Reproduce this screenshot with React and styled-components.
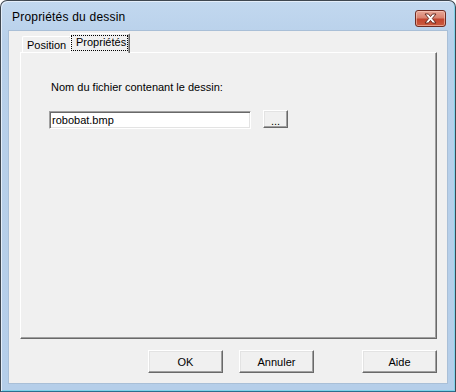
import React from 'react';
import styled, { createGlobalStyle } from 'styled-components';

const GlobalStyle = createGlobalStyle`
  html, body {
    margin: 0;
    padding: 0;
    background: #ffffff;
  }
  body {
    font-family: "Liberation Sans", Arial, sans-serif;
    font-size: 11px;
    color: #000;
  }
`;

const App = () => {
  return (
    <>
      <GlobalStyle />
      <Window>
        <TitleBar>
          <Title>Propriétés du dessin</Title>
          <CloseButton aria-label="Fermer">
            <svg width="15" height="11" viewBox="0 0 15 11">
              <path
                d="M2 1 L5.5 1 L7.5 3.6 L9.5 1 L13 1 L9.3 5.5 L13 10 L9.5 10 L7.5 7.4 L5.5 10 L2 10 L5.7 5.5 Z"
                fill="#ffffff"
                stroke="#5a1f17"
                strokeWidth="0.9"
                strokeLinejoin="round"
              />
            </svg>
          </CloseButton>
        </TitleBar>

        <Client>
          <TabStrip>
            <Tab $width={50}>Position</Tab>
            <Tab $active $width={60}>
              <FocusLabel>Propriétés</FocusLabel>
            </Tab>
          </TabStrip>

          <Panel>
            <FieldLabel>Nom du fichier contenant le dessin:</FieldLabel>
            <FieldRow>
              <TextInput defaultValue="robobat.bmp" />
              <BrowseButton>...</BrowseButton>
            </FieldRow>
          </Panel>

          <ButtonRow>
            <DialogButton>OK</DialogButton>
            <DialogButton $gap={16}>Annuler</DialogButton>
            <DialogButton $gap={48}>Aide</DialogButton>
          </ButtonRow>
        </Client>
      </Window>
    </>
  );
};

const Window = styled.div`
  box-sizing: border-box;
  width: 456px;
  height: 392px;
  border: 1px solid #3f4750;
  border-bottom-color: #2b6f8e;
  border-radius: 7px 7px 0 0;
  background: linear-gradient(to bottom, #c2d8ef 0px, #b8d0ea 40px, #b5cee9 100%);
  display: flex;
  flex-direction: column;
  box-shadow: inset 1px 1px 0 #e4eefa, inset -1px -1px 0 #7fd3ea;
`;

const TitleBar = styled.div`
  height: 29px;
  flex-shrink: 0;
  display: flex;
  align-items: flex-start;
  justify-content: space-between;
  padding: 0 9px 0 11px;
`;

const Title = styled.span`
  margin-top: 9px;
  font-family: "Liberation Sans", Arial, sans-serif;
  font-size: 12px;
  color: #000;
  letter-spacing: 0.2px;
`;

const CloseButton = styled.div`
  box-sizing: border-box;
  margin-top: 9px;
  width: 31px;
  height: 17px;
  border: 1px solid #6e2c23;
  border-radius: 3px;
  background: linear-gradient(to bottom, #e8a898 0%, #d98370 45%, #c2452f 55%, #cb5c40 100%);
  box-shadow: inset 0 0 0 1px rgba(255, 210, 195, 0.55);
  display: flex;
  align-items: center;
  justify-content: center;
`;

const Client = styled.div`
  box-sizing: border-box;
  margin: 0 7px 7px 7px;
  width: 440px;
  height: 354px;
  background: #f0f0f0;
  border: 1px solid #a9bfd7;
  display: flex;
  flex-direction: column;
  padding: 2px 10px 0 11px;
`;

const TabStrip = styled.div`
  height: 19px;
  display: flex;
  align-items: flex-end;
  padding-left: 2px;
`;

const Tab = styled.div`
  box-sizing: border-box;
  position: relative;
  width: ${(p) => p.$width}px;
  height: ${(p) => (p.$active ? '20px' : '16px')};
  margin-bottom: ${(p) => (p.$active ? '-1px' : '0')};
  margin-left: ${(p) => (p.$active ? '-2px' : '0')};
  z-index: ${(p) => (p.$active ? 2 : 1)};
  padding: ${(p) => (p.$active ? '1px 0 0 0' : '2px 0 0 4px')};
  background: #f0f0f0;
  border-top: 1px solid #ffffff;
  border-left: 1px solid #ffffff;
  border-right: 1px solid #696969;
  border-radius: 2px 2px 0 0;
  box-shadow: inset -1px 0 0 #a0a0a0;
  font-size: 11px;
  line-height: 13px;
  white-space: nowrap;
`;

const FocusLabel = styled.span`
  box-sizing: border-box;
  display: inline-block;
  width: 57px;
  padding: 0 0 1px 4px;
  border: 1px dotted #000;
  line-height: 13px;
`;

const Panel = styled.div`
  box-sizing: border-box;
  width: 417px;
  height: 287px;
  background: #f0f0f0;
  border-top: 1px solid #ffffff;
  border-left: 1px solid #ffffff;
  border-right: 1px solid #696969;
  border-bottom: 1px solid #696969;
  box-shadow: inset -1px -1px 0 #a0a0a0;
  padding: 28px 0 0 28px;
  display: flex;
  flex-direction: column;
`;

const FieldLabel = styled.div`
  margin-left: 2px;
  font-size: 11px;
  line-height: 13px;
`;

const FieldRow = styled.div`
  margin-top: 16px;
  display: flex;
  align-items: flex-start;
  gap: 12px;
`;

const TextInput = styled.input`
  box-sizing: border-box;
  width: 202px;
  height: 18px;
  margin: 1px 0 0 0;
  padding: 0 2px;
  background: #ffffff;
  border-top: 1px solid #a0a0a0;
  border-left: 1px solid #a0a0a0;
  border-right: 1px solid #ffffff;
  border-bottom: 1px solid #ffffff;
  box-shadow: inset 1px 1px 0 #696969, inset -1px -1px 0 #e3e3e3;
  font-family: "Liberation Sans", Arial, sans-serif;
  font-size: 11px;
  color: #000;
  outline: none;
`;

const Raised = styled.button`
  box-sizing: border-box;
  padding: 0;
  background: #f0f0f0;
  border-top: 1px solid #ffffff;
  border-left: 1px solid #ffffff;
  border-right: 1px solid #696969;
  border-bottom: 1px solid #696969;
  border-radius: 0;
  box-shadow: inset -1px -1px 0 #a0a0a0, inset 1px 1px 0 #e3e3e3;
  font-family: "Liberation Sans", Arial, sans-serif;
  font-size: 11px;
  color: #000;
  display: flex;
  align-items: center;
  justify-content: center;
`;

const BrowseButton = styled(Raised)`
  width: 25px;
  height: 18px;
  padding-top: 3px;
`;

const ButtonRow = styled.div`
  margin-top: 11px;
  display: flex;
  justify-content: flex-end;
`;

const DialogButton = styled(Raised)`
  width: 75px;
  height: 23px;
  margin-left: ${(p) => (p.$gap ? `${p.$gap}px` : '0')};
`;

export default App;
